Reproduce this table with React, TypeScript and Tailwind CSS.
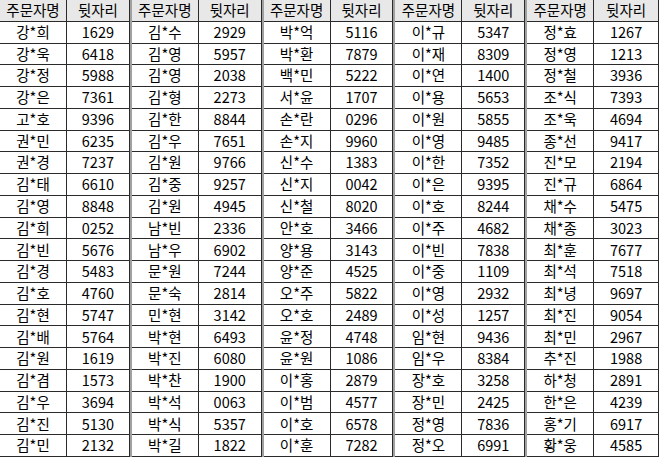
import React from "react";

const groups: [string, string][][] = [
  [
    ["강*희", "1629"], ["강*욱", "6418"], ["강*정", "5988"], ["강*은", "7361"], ["고*호", "9396"],
    ["권*민", "6235"], ["권*경", "7237"], ["김*태", "6610"], ["김*영", "8848"], ["김*희", "0252"],
    ["김*빈", "5676"], ["김*경", "5483"], ["김*호", "4760"], ["김*현", "5747"], ["김*배", "5764"],
    ["김*원", "1619"], ["김*겸", "1573"], ["김*우", "3694"], ["김*진", "5130"], ["김*민", "2132"],
  ],
  [
    ["김*수", "2929"], ["김*영", "5957"], ["김*영", "2038"], ["김*형", "2273"], ["김*한", "8844"],
    ["김*우", "7651"], ["김*원", "9766"], ["김*중", "9257"], ["김*원", "4945"], ["남*빈", "2336"],
    ["남*우", "6902"], ["문*원", "7244"], ["문*숙", "2814"], ["민*현", "3142"], ["박*현", "6493"],
    ["박*진", "6080"], ["박*찬", "1900"], ["박*석", "0063"], ["박*식", "5357"], ["박*길", "1822"],
  ],
  [
    ["박*억", "5116"], ["박*환", "7879"], ["백*민", "5222"], ["서*윤", "1707"], ["손*란", "0296"],
    ["손*지", "9960"], ["신*수", "1383"], ["신*지", "0042"], ["신*철", "8020"], ["안*호", "3466"],
    ["양*용", "3143"], ["양*준", "4525"], ["오*주", "5822"], ["오*호", "2489"], ["윤*정", "4748"],
    ["윤*원", "1086"], ["이*홍", "2879"], ["이*범", "4577"], ["이*호", "6578"], ["이*훈", "7282"],
  ],
  [
    ["이*규", "5347"], ["이*재", "8309"], ["이*연", "1400"], ["이*용", "5653"], ["이*원", "5855"],
    ["이*영", "9485"], ["이*한", "7352"], ["이*은", "9395"], ["이*호", "8244"], ["이*주", "4682"],
    ["이*빈", "7838"], ["이*중", "1109"], ["이*영", "2932"], ["이*성", "1257"], ["임*현", "9436"],
    ["임*우", "8384"], ["장*호", "3258"], ["장*민", "2425"], ["정*영", "7836"], ["정*오", "6991"],
  ],
  [
    ["정*효", "1267"], ["정*영", "1213"], ["정*철", "3936"], ["조*식", "7393"], ["조*욱", "4694"],
    ["종*선", "9417"], ["진*모", "2194"], ["진*규", "6864"], ["채*수", "5475"], ["채*종", "3023"],
    ["최*훈", "7677"], ["최*석", "7518"], ["최*녕", "9697"], ["최*진", "9054"], ["최*민", "2967"],
    ["추*진", "1988"], ["하*청", "2891"], ["한*은", "4239"], ["홍*기", "6917"], ["황*웅", "4585"],
  ],
];

function Group({ rows, last }: { rows: [string, string][]; last: boolean }) {
  return (
    <div
      className={
        "grid h-[457px] grid-cols-[67px_1fr] grid-rows-[repeat(21,minmax(0,1fr))] " +
        (last ? "w-[132px] border-r border-r-[#2a2a2a] mr-[1px]" : "w-[132px] border-r-2 border-r-[#a0a0a0]")
      }
    >
      <div className="flex items-center justify-center border-b border-r border-[#2a2a2a] bg-[#e8e8e8]">주문자명</div>
      <div className={"flex items-center justify-center border-b border-[#2a2a2a] bg-[#e8e8e8] " + (last ? "" : "border-r border-r-[#2a2a2a]")}>뒷자리</div>
      {rows.map(([n, d], i) => (
        <React.Fragment key={i}>
          <div className="flex items-center justify-center border-b border-r border-[#2a2a2a]">{n}</div>
          <div className={"flex items-center justify-center border-b border-[#2a2a2a] " + (last ? "" : "border-r border-r-[#2a2a2a]")}>{d}</div>
        </React.Fragment>
      ))}
    </div>
  );
}

export default function App() {
  return (
    <div
      className="flex h-[457px] w-[660px] overflow-hidden bg-white text-[14.5px] leading-none text-black"
      style={{ fontFamily: '"Noto Sans CJK KR", "Noto Sans", sans-serif' }}
    >
      {groups.map((g, i) => (
        <Group key={i} rows={g} last={i === groups.length - 1} />
      ))}
    </div>
  );
}
